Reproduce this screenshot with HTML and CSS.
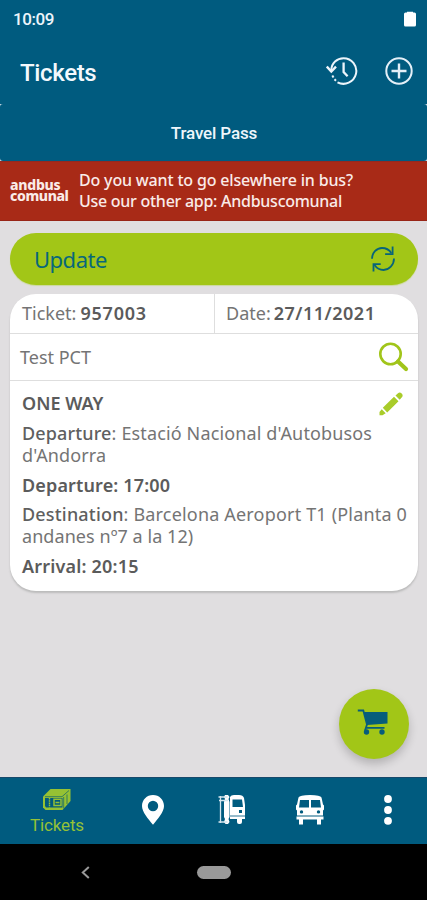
FILE: index.html
```
<!DOCTYPE html>
<html lang="en">
<head>
<meta charset="utf-8">
<meta name="viewport" content="width=device-width, initial-scale=1">
<title>Tickets</title>
<link rel="stylesheet" href="styles.css">
</head>
<body>
<div class="app">
  <div class="status">
    <span class="clock">10:09</span>
    <svg class="battery" width="14" height="17" viewBox="0 0 14 17"><path d="M4 1.500V.8h6v.7h1.500Q13 1.500 13 3v11q0 1.500-1.500 1.500h-9Q1 15.500 1 14V3q0-1.500 1.500-1.500z" fill="#fff"/></svg>
  </div>
  <header class="bar">
    <h1 class="title">Tickets</h1>
    <svg width="32" height="28" viewBox="0 0 32 28" fill="none" stroke="#edf5fb" stroke-width="2"><path d="M5.300 13C5.500 6 11 1.200 17.500 1.200A12.800 12.800 0 1 1 11.500 25.300"/><path d="M.8 9.500l4.500 5 4.700-4.800" stroke-width="2.400"/><path d="M17.600 5.500v9.500l4 4.200" stroke-width="2.300"/><path d="M6.300 18.500l1.200 2M8.500 22.300l1.500 1.500"/></svg>
    <svg class="plus" width="28" height="28" viewBox="0 0 28 28" fill="none" stroke="#e4f0f8" stroke-width="2"><circle cx="14" cy="14" r="12.700"/><path d="M14 6.500v15M6.500 14h15" stroke-width="2.400"/></svg>
  </header>
  <div class="tabs"><div class="tab"><span class="tab-text">Travel Pass</span></div></div>
  <div class="banner">
    <div class="brand"><span class="brand-a">andbus</span><span class="brand-b">comunal</span></div>
    <div class="promo"><span class="promo-a">Do you want to go elsewhere in bus?</span><span class="promo-b">Use our other app: Andbuscomunal</span></div>
  </div>
  <main class="content">
    <button class="update"><span class="update-text">Update</span>
      <svg width="26" height="28" viewBox="0 0 26 28" fill="none" stroke="#08647a" stroke-width="1.800"><path d="M2 13.800C2 8 6.500 3 12 3q6 0 9.300 5M24 13.500C24 20 19 25 13.500 25Q8 25 4.500 20"/><path d="M22.600 1.500v7.600h-7.500M3.500 26.500v-7.400h7.200"/></svg>
    </button>
    <section class="card">
      <div class="meta">
        <div class="cell"><span class="k-ticket">Ticket:</span><b class="v-ticket">957003</b></div>
        <div class="cell date"><span class="k-date">Date:</span><b class="v-date">27/11/2021</b></div>
      </div>
      <div class="passenger"><span class="name">Test PCT</span>
        <svg width="30" height="30" viewBox="0 0 30 30" fill="none" stroke="#a1c51a"><circle cx="11.500" cy="12" r="10.200" stroke-width="2.600"/><path d="M19 19.500l8 7.500" stroke-width="4.200" stroke-linecap="round"/></svg>
      </div>
      <div class="trip">
        <svg class="edit" width="24" height="24" viewBox="0 0 24 24" fill="#a9cc2a"><path d="M3.800 15.800L15 4.800l4.500 4.500L8.200 20.600zM16.500 3.600L19 1.200q1.800-1.500 3.700.3 1.800 1.800.2 3.700L20.700 7.700zM2.700 17.200l4 4-3.200 2H.5V20z"/></svg>
        <p class="strong"><span class="one-way">ONE WAY</span></p>
        <p><span class="from-a"><span class="label">Departure</span>: Estació Nacional d'Autobusos</span><br><span class="from-b">d'Andorra</span></p>
        <p class="strong"><span class="leave">Departure: 17:00</span></p>
        <p><span class="to-a"><span class="label">Destination</span>: Barcelona Aeroport T1 (Planta 0</span><br><span class="to-b">andanes nº7 a la 12)</span></p>
        <p class="strong"><span class="arrive">Arrival: 20:15</span></p>
      </div>
    </section>
    <button class="cart" aria-label="Cart">
      <svg width="32" height="26" viewBox="0 0 32 26"><path d="M7 3h23.500v11.500L10 16z" fill="#075d7b"/><path d="M.8 1.500h5.500L10 15.500 8 21.500M9 18.800H27.500" fill="none" stroke="#075d7b" stroke-width="1.800"/><circle cx="9.500" cy="23" r="2.700" fill="#075d7b"/><circle cx="25" cy="23" r="2.700" fill="#075d7b"/></svg>
    </button>
  </main>
  <nav class="nav">
    <div class="item active">
      <svg width="30" height="23" viewBox="0 0 30 23"><path d="M1 8.500L8.500 1H28.500V13L20.500 22H3.500L1 19.500z" fill="#96c133"/><path d="M3 8.700H20L27 2.500M21.700 9v11.500M25 6.500v9.500" fill="none" stroke="#1c6a65" stroke-width=".8"/><path d="M3 10h17.500v9.500H4L3 18z" fill="#025b7c"/><path d="M7.500 10v9.500" stroke="#96c133" stroke-width="1.400" stroke-dasharray="1.500 .7"/><path d="M12 11.300h7v6.200h-7zM13.500 14.500h4" fill="none" stroke="#96c133" stroke-width="1.500"/></svg>
      <span class="nav-text">Tickets</span>
    </div>
    <div class="item"><svg width="24" height="32" viewBox="0 0 24 32"><path fill="#fff" fill-rule="evenodd" d="M12 1C5.800 1 1 5.800 1 12c0 6 6 12.500 11 18.800C17 24.500 23 18 23 12 23 5.800 18.200 1 12 1zm0 5.800a5.200 5.200 0 1 1 0 10.400 5.200 5.200 0 0 1 0-10.400z"/></svg></div>
    <div class="item"><svg width="28" height="32" viewBox="0 0 28 32" fill="#fff"><path fill-rule="evenodd" d="M12 3q1-2 4-2h5q4 0 5 3l1 7v14h-3v3q0 2-2 2h-1q-2 0-2-2v-3h-7zm2.500 2.500V13H25l-1-7.500zM21 16v3h3v-3z"/><path d="M7 1h3l1.500 2-1 2 1 3v15l-1 2 1 3-1.500 2H7.500L6 28l1-3-1-2V8l1-3-1-2z"/><path d="M2.500 2v27M.5 3h9M1 6.500h9M.5 28h9" fill="none" stroke="#d5e6ef" stroke-width="1.300"/><path d="M12 22h15" stroke="#2b7595" stroke-width="1"/></svg></div>
    <div class="item"><svg width="30" height="32" viewBox="0 0 30 32" fill="#fff"><path fill-rule="evenodd" d="M3.500 3.500Q4.500 1 15 1t11.500 2.500l1.500 7 1 1v4l-1 1v5H2v-5l-1-1v-4l1-1zM5 6l-1 7.500h10V6zm11 0v7.500h10L25 6zM6.500 16.200a1.700 1.700 0 1 0 0 3.400 1.700 1.700 0 0 0 0-3.400zm17 0a1.700 1.700 0 1 0 0 3.400 1.700 1.700 0 0 0 0-3.400z"/><path d="M1.500 22.500h27v3h-2.500v5h-4v-5H8v5H4v-5H1.500z"/></svg></div>
    <div class="item"><svg width="10" height="32" viewBox="0 0 10 32" fill="#fff"><circle cx="5" cy="5" r="3.900"/><circle cx="5" cy="16" r="3.900"/><circle cx="5" cy="26.800" r="3.900"/></svg></div>
  </nav>
  <div class="system">
    <svg width="9" height="13" viewBox="0 0 9 13" fill="none" stroke="#999" stroke-width="2"><path d="M7.800 1L1.800 6.500l6 5.500"/></svg>
    <span class="home"></span>
  </div>
</div>
</body>
</html>
```
FILE: styles.css
```
* { box-sizing: border-box; }
body { margin: 0; background: #e0dee0; font-family: "Noto Sans", sans-serif; color: #747474; }
svg { display: block; flex: none; }
span, b { white-space: nowrap; }
button { border: 0; font: inherit; }
.app { width: 427px; height: 900px; display: flex; flex-direction: column; overflow: hidden; }
.status { height: 40px; padding: 0 10px 2px 13px; display: flex; justify-content: space-between; align-items: center; background: #005b7f; color: #edf5fb; }
.clock { font: 500 17px/20px Roboto, sans-serif; letter-spacing: -.4px; }
.bar { height: 64px; padding: 0 14px 0 20px; display: flex; align-items: center; background: #005b7f; }
.title { flex: 1; margin: 0; padding-top: 1px; color: #f4f9fd; font: 500 24px/28px Roboto, sans-serif; letter-spacing: -.35px; }
.bar svg { margin-bottom: 2px; }
.plus { margin-left: 27px; }
.tabs { height: 57px; background: #c9dbe5; }
.tab { height: 57px; display: flex; align-items: center; justify-content: center; padding: 1px 0 0 1px; border-radius: 3px; background: #005b7f; color: #edf5fb; font: 500 17px/20px Roboto, sans-serif; letter-spacing: -.15px; }
.banner { height: 60px; padding: 0 10px; display: flex; align-items: center; background: #a82a17; border-top: 1px solid #95291f; border-bottom: 1px solid #982517; color: #faebe8; }
.brand { width: 69px; display: flex; flex-direction: column; font: 800 14px/11px "Noto Sans", sans-serif; padding-bottom: 2px; }
.brand-a { letter-spacing: -.25px; }
.brand-b { letter-spacing: -.4px; }
.promo { display: flex; flex-direction: column; font-size: 16px; font-weight: 500; line-height: 21px; }
.promo-a { letter-spacing: -.17px; }
.promo-b { letter-spacing: -.27px; }
.content { flex: 1; position: relative; padding: 12px 9px 0 10px; background: #e0dee0; }
.update { width: 100%; height: 52px; padding: 0 22px 0 24px; border-radius: 26px; display: flex; align-items: center; justify-content: space-between; background: #a2c617; color: #08687a; box-shadow: 0 1px 1px #cbd99b; font-size: 22px; letter-spacing: -.5px; }
.card { margin-top: 9px; height: 297px; border-radius: 26px; background: #fff; box-shadow: 0 2px 2px #bbb; overflow: hidden; font-size: 18px; line-height: 22px; }
.meta { height: 40px; display: grid; grid-template-columns: 204px 1fr; border-bottom: 1px solid #dedede; }
.cell { display: flex; gap: 4px; align-items: center; padding: 0 0 1px 12px; }
.cell b { color: #5b5b5b; font-weight: 600; }
.v-ticket { letter-spacing: .8px; }
.date { gap: 3px; padding-left: 11px; border-left: 1px solid #dedede; }
.v-date { letter-spacing: .5px; }
.passenger { height: 47px; padding: 0 9px 0 10px; display: flex; align-items: center; justify-content: space-between; border-bottom: 1px solid #dedede; }
.trip { position: relative; padding: 11px 0 0 12px; }
.trip p { margin: 0 0 7.800px; }
.trip .label { color: #5f5f5f; font-weight: 500; }
.trip .strong { color: #5b5b5b; font-weight: 600; }
.from-a, .from-b, .leave { letter-spacing: .14px; }
.to-a, .arrive { letter-spacing: .18px; }
.to-b { letter-spacing: .06px; }
.edit { position: absolute; right: 15px; top: 11px; }
.cart { position: absolute; right: 18px; bottom: 18px; width: 70px; height: 70px; border-radius: 50%; padding: 0 2px 4px 0; display: flex; align-items: center; justify-content: center; background: #a2c617; box-shadow: 0 5px 10px #0003; }
.nav { height: 67px; display: grid; grid-template-columns: 114px 78px 79px 78px 78px; background: #005b7f; border-top: 1px solid #17496b; }
.item { display: flex; flex-direction: column; align-items: center; justify-content: center; padding-bottom: 2px; }
.active { color: #94c137; font: 400 17px/20px Roboto, sans-serif; letter-spacing: -.15px; gap: 4px; padding: 1px 0 0; }
.system { height: 56px; display: flex; align-items: center; padding-left: 81px; background: #000; }
.home { width: 34px; height: 13px; margin-left: 107px; border-radius: 7px; background: #999; }
```
